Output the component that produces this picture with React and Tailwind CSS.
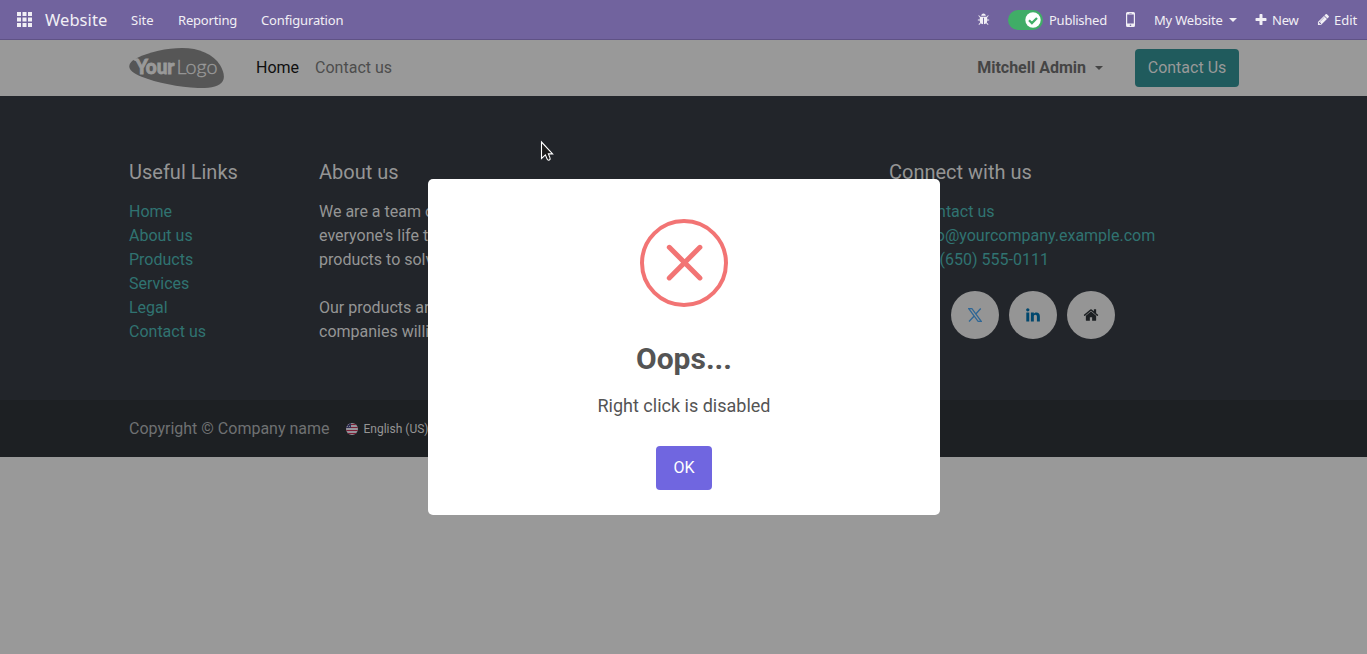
import React from "react";

const PATHS = {
  bug: "M1696 960q0 26-19 45t-45 19h-224q0 171-67 290l208 209q19 19 19 45t-19 45q-18 19-45 19t-45-19l-198-197q-5 5-15 13t-42 28.5-65 36.5-82 29-97 13v-896h-128v896q-51 0-101.5-13.5t-87-33-66-39-43.5-32.5l-15-14-183 207q-20 21-48 21-24 0-43-16-19-18-20.5-44.5t15.5-46.5l202-227q-58-114-58-274h-224q-26 0-45-19t-19-45 19-45 45-19h224v-294l-173-173q-19-19-19-45t19-45 45-19 45 19l173 173h844l173-173q19-19 45-19t45 19 19 45-19 45l-173 173v294h224q26 0 45 19t19 45zm-480-576h-640q0-133 93.5-226.5t226.5-93.5 226.5 93.5 93.5 226.5z",
  plus: "M1600 736v192q0 40-28 68t-68 28h-416v416q0 40-28 68t-68 28h-192q-40 0-68-28t-28-68v-416h-416q-40 0-68-28t-28-68v-192q0-40 28-68t68-28h416v-416q0-40 28-68t68-28h192q40 0 68 28t28 68v416h416q40 0 68 28t28 68z",
  pencil: "M491 1536l91-91-235-235-91 91v107h128v128h107zm523-928q0-22-22-22-10 0-17 7l-542 542q-7 7-7 17 0 22 22 22 10 0 17-7l542-542q7-7 7-17zm-54-192l416 416-832 832h-416v-416zm683 96q0 53-37 90l-166 166-416-416 166-165q36-38 90-38 53 0 91 38l235 234q37 39 37 91z",
  home: "M1472 992v480q0 26-19 45t-45 19h-384v-384h-256v384h-384q-26 0-45-19t-19-45v-480q0-1 .5-3t.5-3l575-474 575 474q1 2 1 6zm223-69l-62 74q-8 9-21 11h-3q-13 0-21-7l-692-577-692 577q-12 8-24 7-13-2-21-11l-62-74q-8-10-7-23.5t11-21.5l719-599q32-26 76-26t76 26l244 204v-195q0-14 9-23t23-9h192q14 0 23 9t9 23v408l219 182q10 8 11 21.5t-7 23.5z",
  linkedin: "M477 625v991h-330v-991h330zm21-306q1 73-50.5 122t-135.5 49h-2q-82 0-132-49t-50-122q0-74 51.5-122.5t134.5-48.5 133 48.5 51 122.5zm1166 729v568h-329v-530q0-105-40.5-164.5t-126.5-59.5q-63 0-105.5 34.5t-63.5 85.5q-11 30-11 81v553h-329q2-399 2-647t-1-296l-1-48h329v144h-2q20-32 41-56t56.5-52 87-43.5 114.5-15.5q171 0 275 113.5t104 332.5z",
};

function Icon({ name, className }) {
  return (
    <svg viewBox="0 0 1792 1792" fill="currentColor" className={className}>
      <path d={PATHS[name]} />
    </svg>
  );
}

function Caret({ className }) {
  return (
    <svg viewBox="0 0 8 4" fill="currentColor" className={className}>
      <path d="M0 0h8L4 4z" />
    </svg>
  );
}

function Logo() {
  return (
    <svg width="95" height="40" viewBox="0 0 95 40" className="block">
      <path
        d="M0.3 18.5C0.3 15 3 12.5 8 10C20 4 38 0 53 0C70 0 84 6 91 17C94 22 95.500 27 94.600 31C93 38 83 40.500 69 40C50 39 28 35 12 28.500C4 25 0.300 22 0.300 18.500Z"
        fill="#565656"
      />
      <path d="M4 10.500h5l-1 3-3-1z" fill="#999" />
      <text x="6.500" y="25.500" textLength="39" lengthAdjust="spacingAndGlyphs" fontFamily="Lato, sans-serif" fontWeight="900" fontSize="20" fill="#999" stroke="#999" strokeWidth="0.900">
        Your
      </text>
      <text x="47.500" y="25.500" textLength="41" lengthAdjust="spacingAndGlyphs" fontFamily="Lato, sans-serif" fontWeight="300" fontSize="20.500" fill="#999" stroke="#999" strokeWidth="0.350">
        Logo
      </text>
    </svg>
  );
}

function Flag() {
  return (
    <svg width="12" height="12" viewBox="0 0 12 12" className="block">
      <clipPath id="flag-round">
        <circle cx="6" cy="6" r="6" />
      </clipPath>
      <g clipPath="url(#flag-round)">
        <rect width="12" height="12" fill="#96939a" />
        <path d="M0 1.500h12M0 4.500h12M0 7.500h12M0 10.500h12" stroke="#7c1f35" strokeWidth="1.100" />
        <rect width="5" height="5" fill="#2c2f55" />
        <path d="M2 1.500h1M1 3.500h1M3 3.500h1" stroke="#96939a" strokeWidth="0.800" />
      </g>
    </svg>
  );
}

function TopBar() {
  return (
    <nav className="flex h-10 items-center border-b border-[#5f5285] bg-[#71639e] pl-[17px] pr-[9px] font-['Noto_Sans',sans-serif] text-[13px] text-[#f1eff5]">
      <svg width="15" height="15" viewBox="0 0 15 15" fill="currentColor" className="mr-[13px] mb-px">
        {[0, 5.5, 11].map((y) =>
          [0, 5.5, 11].map((x) => <rect key={`${x}-${y}`} x={x} y={y} width="4" height="4" />)
        )}
      </svg>
      <span className="w-[86px] whitespace-nowrap pt-px text-[16.500px] tracking-[0.050px]">Website</span>
      <span className="w-[47px] whitespace-nowrap pt-[2px]">Site</span>
      <span className="w-[83px] whitespace-nowrap pt-[2px] tracking-[-0.180px]">Reporting</span>
      <span className="whitespace-nowrap pt-[2px] tracking-[-0.150px]">Configuration</span>
      <div className="ml-auto flex items-center">
        <Icon name="bug" className="mr-[18px] size-[13px]" />
        <span className="mr-[6px] flex h-5 w-[35px] items-center justify-end rounded-full bg-[#40ad67] pr-[2px]">
          <svg width="16" height="16" viewBox="0 0 16 16">
            <circle cx="8" cy="8" r="7.700" fill="#fff" />
            <path d="M4 8.300l2.900 2.800 5.100-5.200" fill="none" stroke="#40ad67" strokeWidth="2.200" />
          </svg>
        </span>
        <span className="w-[77px] whitespace-nowrap pt-[2px] tracking-[-0.250px]">Published</span>
        <svg width="9" height="15" viewBox="0 0 9 15" className="mr-[19px]">
          <path fillRule="evenodd" fill="currentColor" d="M1.500 0h6A1.500 1.500 0 0 1 9 1.500v12A1.500 1.500 0 0 1 7.500 15h-6A1.500 1.500 0 0 1 0 13.500v-12A1.500 1.500 0 0 1 1.500 0zM1.200 2.500v9h6.600v-9zM3.300 1v.5h2.400V1zM4.500 12.400a.8.8 0 1 0 0 1.600.8.8 0 0 0 0-1.600z" />
        </svg>
        <span className="w-[75px] whitespace-nowrap pt-[2px] tracking-[-0.200px]">My Website</span>
        <Caret className="mr-[17px] h-1 w-2" />
        <Icon name="plus" className="mr-[4px] size-[14px]" />
        <span className="w-[45px] whitespace-nowrap pt-[2px] tracking-[-0.200px]">New</span>
        <Icon name="pencil" className="mr-[4px] size-[13px]" />
        <span className="w-[24px] whitespace-nowrap pt-[2px]">Edit</span>
      </div>
    </nav>
  );
}

function Header() {
  return (
    <header className="flex h-14 items-center bg-[#999] pl-[129px] pr-[128px] text-base">
      <Logo />
      <span className="ml-8 text-[#0f0f0f]">Home</span>
      <span className="ml-4 text-[#4d4d4d]">Contact us</span>
      <span className="ml-auto font-bold text-[#454545]">Mitchell Admin</span>
      <Caret className="ml-[9px] mr-8 h-1 w-2 text-[#454545]" />
      <span className="flex h-[38px] w-[104px] items-center justify-center rounded bg-[#205b5d] text-[#999]">Contact Us</span>
    </header>
  );
}

function Social({ children }) {
  return <span className="flex size-12 shrink-0 items-center justify-center rounded-full bg-[#959595]">{children}</span>;
}

function Footer() {
  return (
    <footer>
      <div className="grid h-[304px] grid-cols-[190px_570px_1fr] bg-[#22252a] pl-[129px] pt-16 text-base leading-6 text-[#959595]">
        <div>
          <h5 className="mb-4 text-xl leading-6">Useful Links</h5>
          <ul className="text-[#307371]">
            {["Home", "About us", "Products", "Services", "Legal", "Contact us"].map((t) => (
              <li key={t}>{t}</li>
            ))}
          </ul>
        </div>
        <div className="whitespace-nowrap">
          <h5 className="mb-4 text-xl leading-6">About us</h5>
          <p>
            We are a team of passionate people whose goal is to improve
            <br />
            everyone's life through disruptive products. We build great
            <br />
            products to solve your business problems.
          </p>
          <p className="mt-6">
            Our products are designed for small to medium size
            <br />
            companies willing to optimize their performance.
          </p>
        </div>
        <div className="whitespace-nowrap">
          <h5 className="mb-4 text-xl leading-6">Connect with us</h5>
          <ul className="text-[#307371]">
            <li className="pl-[28.500px]">Contact us</li>
            <li className="pl-[28.500px]">info@yourcompany.example.com</li>
            <li className="pl-[28.500px]">+1 (650) 555-0111</li>
          </ul>
          <div className="mt-[19px] flex gap-[10px] pl-[62px]">
            <Social>
              <svg width="14" height="14" viewBox="0 0 14 14" fill="none" stroke="#2f6796">
                <path d="M.8.7h3.100l9.300 12.600h-3.100z" strokeWidth="1.200" />
                <path d="M12.700.5L7.800 6M6.200 8L1 13.500" strokeWidth="1.300" />
              </svg>
            </Social>
            <Social>
              <Icon name="linkedin" className="size-4 text-[#00476d]" />
            </Social>
            <Social>
              <Icon name="home" className="size-4 text-[#1c1f22]" />
            </Social>
          </div>
        </div>
      </div>
      <div className="flex h-[57px] items-center bg-[#1d2023] pl-[129px] text-[#6f7172]">
        <span className="w-[217px] text-base">Copyright © Company name</span>
        <Flag />
        <span className="ml-[5.500px] text-xs text-[#959595]">English (US)</span>
      </div>
    </footer>
  );
}

function Dialog() {
  return (
    <div className="absolute left-[428px] top-[179px] flex h-[336px] w-[512px] flex-col items-center rounded-[5px] bg-white pt-10 text-[#545454]">
      <svg width="88" height="88" viewBox="0 0 88 88" fill="none" stroke="#f27474">
        <circle cx="44" cy="44" r="42" strokeWidth="4" />
        <path d="M29.300 28.300l30.600 30.600M59.900 28.300l-30.600 30.600" strokeWidth="5" strokeLinecap="round" />
      </svg>
      <h2 className="mt-[34px] text-[30px] font-bold leading-9">Oops...</h2>
      <p className="mt-[15px] text-lg leading-7">Right click is disabled</p>
      <button className="mt-[26px] h-11 w-14 rounded bg-[#7066e0] text-base text-white">OK</button>
    </div>
  );
}

export default function App() {
  return (
    <div className="relative h-[654px] overflow-hidden bg-[#999] font-[Roboto,sans-serif]">
      <TopBar />
      <Header />
      <Footer />
      <Dialog />
      <svg width="14" height="22" viewBox="0 0 14 22" className="absolute left-[540px] top-[140px]">
        <path d="M1.500 2v16.500l3.900-3.600 1.700 4.200q.8 1.600 2.200 1 1.300-.8.700-2.200l-1.600-4h4.200z" fill="#1c1c1c" stroke="#fff" strokeWidth="1.100" />
      </svg>
    </div>
  );
}
